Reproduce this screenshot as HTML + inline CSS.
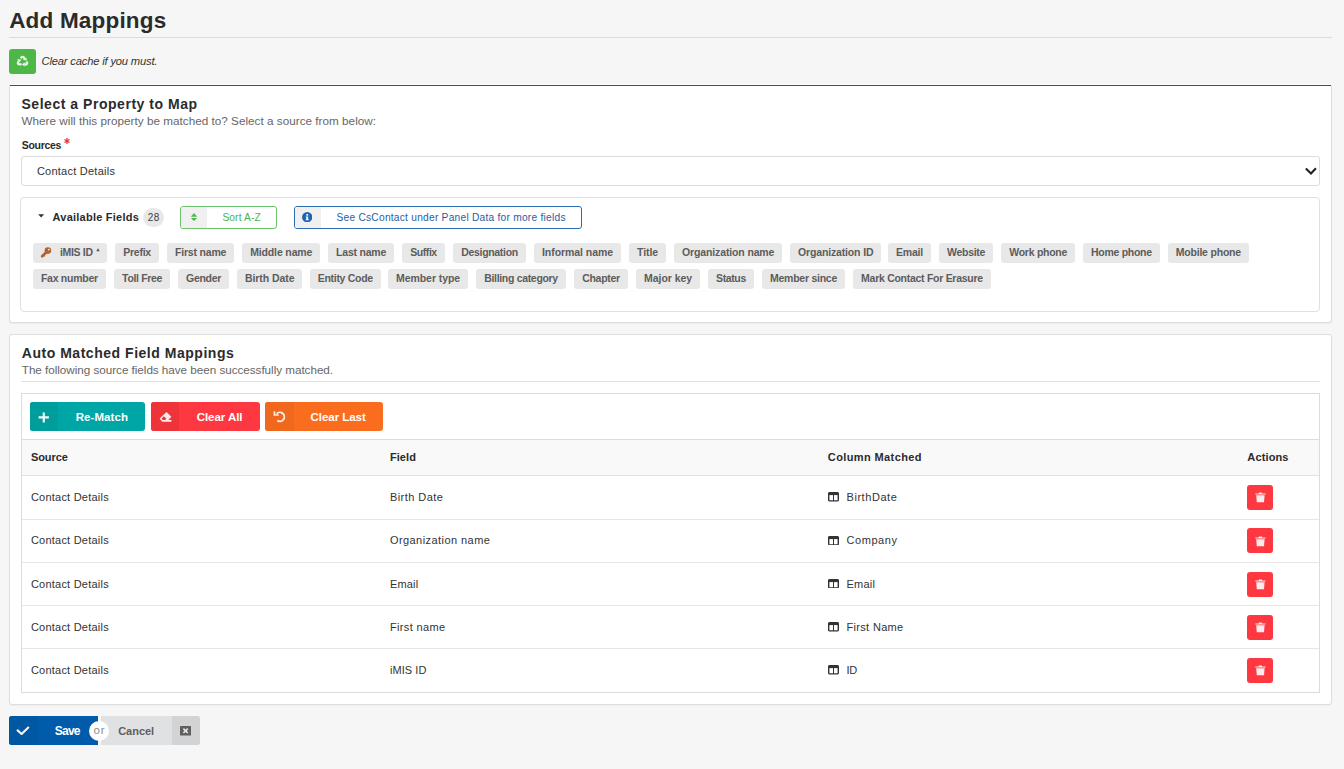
<!DOCTYPE html>
<html><head><meta charset="utf-8"><title>Add Mappings</title>
<style>
html,body{margin:0;padding:0;}
body{width:1344px;height:769px;background:#f6f6f6;position:relative;overflow:hidden;font-family:"Liberation Sans", sans-serif;}
.t{position:absolute;white-space:nowrap;}
.b{position:absolute;box-sizing:border-box;}
.chip{background:#e8e8e8;border-radius:3px;}
svg{position:absolute;}
</style></head><body>
<!-- header -->
<div class="b" style="left:9px;top:37px;width:1323px;height:1px;background:#dcdcdc"></div>
<div class="b" style="left:9px;top:49px;width:27px;height:25px;background:#4db848;border-radius:3px"></div>
<!-- panel 1 -->
<div class="b" style="left:9px;top:84px;width:1323px;height:239px;background:#fff;border:1px solid #dedede;border-top-color:#fff;border-radius:3px;box-shadow:0 1px 1px rgba(0,0,0,0.04)"></div>
<div class="b" style="left:10px;top:85px;width:1321px;height:1.4px;background:#0b5aa8"></div>
<div class="b" style="left:21px;top:156px;width:1299px;height:30px;border:1px solid #dcdcdc;border-radius:3px;background:#fff"></div>
<div class="b" style="left:20px;top:197px;width:1300px;height:115px;border:1px solid #e0e0e0;border-radius:4px;background:#fff"></div>
<div class="b" style="left:143px;top:208px;width:21px;height:19px;border-radius:10px;background:#e8e8e8"></div>
<div class="b" style="left:180px;top:206px;width:97px;height:23px;border:1px solid #6cc36c;border-radius:3px;background:#fff"></div>
<div class="b" style="left:181px;top:207px;width:26px;height:21px;background:#f0f0f0;border-radius:2px 0 0 2px"></div>
<div class="b" style="left:294px;top:206px;width:288px;height:23px;border:1px solid #2a6db5;border-radius:3px;background:#fff"></div>
<div class="b" style="left:295px;top:207px;width:26px;height:21px;background:#f0f0f0;border-radius:2px 0 0 2px"></div>
<div class='b chip' style='left:32.9px;top:243px;width:74.0px;height:20px'></div><div class='b chip' style='left:115.2px;top:243px;width:43.5px;height:20px'></div><div class='b chip' style='left:167.0px;top:243px;width:66.9px;height:20px'></div><div class='b chip' style='left:242.2px;top:243px;width:77.7px;height:20px'></div><div class='b chip' style='left:328.1px;top:243px;width:65.7px;height:20px'></div><div class='b chip' style='left:402.3px;top:243px;width:42.4px;height:20px'></div><div class='b chip' style='left:453.2px;top:243px;width:72.5px;height:20px'></div><div class='b chip' style='left:534.0px;top:243px;width:86.6px;height:20px'></div><div class='b chip' style='left:629.0px;top:243px;width:36.7px;height:20px'></div><div class='b chip' style='left:674.1px;top:243px;width:107.8px;height:20px'></div><div class='b chip' style='left:790.1px;top:243px;width:90.9px;height:20px'></div><div class='b chip' style='left:887.9px;top:243px;width:42.9px;height:20px'></div><div class='b chip' style='left:939.1px;top:243px;width:53.8px;height:20px'></div><div class='b chip' style='left:1001.2px;top:243px;width:73.7px;height:20px'></div><div class='b chip' style='left:1083.0px;top:243px;width:76.6px;height:20px'></div><div class='b chip' style='left:1167.7px;top:243px;width:81.0px;height:20px'></div><div class='b chip' style='left:32.9px;top:268.5px;width:72.7px;height:20.3px'></div><div class='b chip' style='left:114.1px;top:268.5px;width:55.8px;height:20.3px'></div><div class='b chip' style='left:178.1px;top:268.5px;width:50.7px;height:20.3px'></div><div class='b chip' style='left:237.0px;top:268.5px;width:65.0px;height:20.3px'></div><div class='b chip' style='left:309.8px;top:268.5px;width:70.8px;height:20.3px'></div><div class='b chip' style='left:388.0px;top:268.5px;width:79.7px;height:20.3px'></div><div class='b chip' style='left:476.2px;top:268.5px;width:89.5px;height:20.3px'></div><div class='b chip' style='left:574.2px;top:268.5px;width:53.5px;height:20.3px'></div><div class='b chip' style='left:636.0px;top:268.5px;width:63.7px;height:20.3px'></div><div class='b chip' style='left:708.0px;top:268.5px;width:45.8px;height:20.3px'></div><div class='b chip' style='left:762.0px;top:268.5px;width:82.8px;height:20.3px'></div><div class='b chip' style='left:853.1px;top:268.5px;width:137.5px;height:20.3px'></div>
<!-- panel 2 -->
<div class="b" style="left:9px;top:334px;width:1323px;height:371px;background:#fff;border:1px solid #dedede;border-radius:3px;box-shadow:0 1px 1px rgba(0,0,0,0.04)"></div>
<div class="b" style="left:21px;top:381px;width:1299px;height:1px;background:#e0e0e0"></div>
<div class="b" style="left:21px;top:393px;width:1299px;height:300px;border:1px solid #dcdcdc;background:#fff"></div>
<div class="b" style="left:22px;top:439px;width:1297px;height:37px;background:#f9f9f9;border-top:1px solid #dcdcdc;border-bottom:1px solid #e2e2e2"></div>
<div class="b" style="left:22px;top:519px;width:1297px;height:1px;background:#e6e6e6"></div>
<div class="b" style="left:22px;top:562px;width:1297px;height:1px;background:#e6e6e6"></div>
<div class="b" style="left:22px;top:605px;width:1297px;height:1px;background:#e6e6e6"></div>
<div class="b" style="left:22px;top:648px;width:1297px;height:1px;background:#e6e6e6"></div>
<div class="b" style="left:30px;top:402px;width:115px;height:29px;background:#00a6a6;border-radius:3px;overflow:hidden"><div class="b" style="left:0;top:0;width:28px;height:29px;background:#009d9d"></div></div>
<div class="b" style="left:151px;top:402px;width:109px;height:29px;background:#fd3840;border-radius:3px;overflow:hidden"><div class="b" style="left:0;top:0;width:28px;height:29px;background:#ee3439"></div></div>
<div class="b" style="left:265px;top:402px;width:118px;height:29px;background:#fa6d1f;border-radius:3px;overflow:hidden"><div class="b" style="left:0;top:0;width:29px;height:29px;background:#ef681d"></div></div>
<div class="b" style="left:1247px;top:484.8px;width:26px;height:25px;background:#fd3840;border-radius:3px"></div><div class="b" style="left:1247px;top:528.3px;width:26px;height:25px;background:#fd3840;border-radius:3px"></div><div class="b" style="left:1247px;top:571.6px;width:26px;height:25px;background:#fd3840;border-radius:3px"></div><div class="b" style="left:1247px;top:614.8px;width:26px;height:25px;background:#fd3840;border-radius:3px"></div><div class="b" style="left:1247px;top:658.0px;width:26px;height:25px;background:#fd3840;border-radius:3px"></div>
<!-- footer -->
<div class="b" style="left:9px;top:716px;width:89px;height:29px;background:#005cab;border-radius:3px 0 0 3px;overflow:hidden"><div class="b" style="left:0;top:0;width:29px;height:29px;background:#0058a3"></div></div>
<div class="b" style="left:101px;top:716px;width:99px;height:29px;background:#e0e1e3;border-radius:0 3px 3px 0;overflow:hidden"><div class="b" style="left:71px;top:0;width:28px;height:29px;background:#d2d3d5"></div></div>
<div class="b" style="left:89px;top:720.5px;width:20px;height:20px;background:#fff;border-radius:50%"></div>
<!-- recycle -->
<svg style="left:14px;top:53px" width="18" height="18" viewBox="0 0 18 18"><g fill="none" stroke="#eef9ec" stroke-width="2.2" stroke-linejoin="round"><path d="M6.6 5.2 L8 3.9 L9.6 4 L10.8 5.8"/><path d="M4.7 8.2 L3.8 9.9 L4.5 11.2 L7.6 11.3"/><path d="M12.4 8.4 L13.3 10.1 L12.6 11.3 L10.4 11.3"/></g><g fill="#eef9ec"><path d="M8.9 6.4 L12.6 4.8 L12.6 7.8Z"/><path d="M3 6.2 L7.3 6.4 L5.6 9.2Z"/><path d="M10.6 9.3 L10.6 13.5 L8 11.4Z"/></g></svg>
<!-- required asterisk -->
<svg style="left:63.5px;top:137.5px" width="6" height="6" viewBox="0 0 6 6"><g stroke="#e8323c" stroke-width="1.3" stroke-linecap="round"><path d="M3 0.6V5.4"/><path d="M0.9 1.8L5.1 4.2"/><path d="M5.1 1.8L0.9 4.2"/></g></svg>
<!-- select chevron -->
<svg style="left:1305px;top:167px" width="12" height="9" viewBox="0 0 12 9"><path d="M1.6 2.2 L6 6.4 L10.2 2" fill="none" stroke="#222" stroke-width="2.1" stroke-linecap="square"/></svg>
<!-- caret -->
<svg style="left:37.6px;top:214.2px" width="7" height="5" viewBox="0 0 7 5"><path d="M0.2 0.2 H6.1 L3.15 3.6Z" fill="#333"/></svg>
<!-- sort -->
<svg style="left:189.5px;top:212px" width="8" height="10" viewBox="0 0 8 10"><path d="M0.8 4.8 H7.2 L4 0.9Z" fill="#4cbb4c"/><path d="M0.8 5.9 H7.2 L4 9Z" fill="#4cbb4c"/></svg>
<!-- info -->
<svg style="left:302px;top:212px" width="10.4" height="10.4" viewBox="0 0 10 10"><circle cx="5" cy="5" r="5" fill="#1a67b4"/><rect x="4.2" y="2" width="1.7" height="1.6" fill="#fff"/><path d="M3.7 4.3 H5.9 V6.9 H6.5 V8 H3.6 V6.9 H4.2 V5.3 H3.7Z" fill="#fff"/></svg>
<!-- key -->
<svg style="left:39.5px;top:246.5px" width="12" height="11" viewBox="0 0 12 11"><circle cx="7.9" cy="3.6" r="3.3" fill="#b2642f"/><path d="M6.3 5.3 L2.2 9.3" stroke="#b2642f" stroke-width="2.7" stroke-linecap="round"/><path d="M3.6 8.2 L4.9 9.3" stroke="#b2642f" stroke-width="1.5"/><circle cx="8.9" cy="2.6" r="0.95" fill="#e8e8e8"/></svg>
<!-- iMIS asterisk -->
<svg style="left:95.5px;top:248px" width="4" height="3.5" viewBox="0 0 4 3.5"><path d="M2 0.2 L3.7 3.2 H0.3Z" fill="#555"/></svg>
<!-- plus -->
<svg style="left:38px;top:411.5px" width="11.5" height="11" viewBox="0 0 11.5 11"><path d="M5.8 0.6V10.4M0.6 5.4H10.9" stroke="#eefafa" stroke-width="2.2"/></svg>
<!-- eraser -->
<svg style="left:158.5px;top:411px" width="13" height="11.5" viewBox="0 0 13 11.5"><path d="M7.55 1 L12.3 5.85 L9.3 9.1 H12.4 V10.7 H3.3 L0.6 7.6Z" fill="#fde9eb"/><path d="M4.9 5.3 L7.4 7.7 L6.1 9 H3.8 L2.6 7.5Z" fill="#ee3439"/></svg>
<!-- undo -->
<svg style="left:273px;top:411px" width="13" height="12" viewBox="0 0 13 12"><path d="M3.7 2.6 A4.5 4.5 0 1 1 4.3 9.6" fill="none" stroke="#fdeee6" stroke-width="1.8"/><path d="M0.6 0.2 H2.3 V3.3 H5.8 V4.8 H0.6Z" fill="#fdeee6"/></svg>
<!-- save check -->
<svg style="left:16px;top:726px" width="14" height="10" viewBox="0 0 14 10"><path d="M1.6 4.4 L5.6 8 L12.3 1.5" fill="none" stroke="#f4f8fc" stroke-width="2.1" stroke-linejoin="round" stroke-linecap="round"/></svg>
<!-- cancel close -->
<svg style="left:180px;top:726px" width="11.2" height="9.6" viewBox="0 0 11.2 9.6"><rect x="0" y="0" width="11.2" height="9.6" rx="0.8" fill="#5f5f5f"/><path d="M3.4 2.6 L7.8 7 M7.8 2.6 L3.4 7" stroke="#e6e6e6" stroke-width="1.7"/></svg>
<svg style="left:828px;top:492.1px" width="11" height="9.6" viewBox="0 0 11 9.6"><rect x="0.7" y="0.7" width="9.6" height="8.2" rx="1" fill="none" stroke="#333" stroke-width="1.4"/><rect x="0.5" y="0.5" width="10" height="2.6" fill="#333"/><rect x="5" y="2" width="1" height="7" fill="#333"/></svg><svg style="left:1255px;top:492.1px" width="11" height="11" viewBox="0 0 11 11"><path d="M0.3 1.6 H10.5 V2.5 H0.3Z M3.8 0.6 H7 V1.8 H3.8Z" fill="#ffe9ea"/><path d="M1.2 3.2 H9.6 L9 10.3 H1.8Z" fill="#ffe9ea"/></svg><svg style="left:828px;top:535.6px" width="11" height="9.6" viewBox="0 0 11 9.6"><rect x="0.7" y="0.7" width="9.6" height="8.2" rx="1" fill="none" stroke="#333" stroke-width="1.4"/><rect x="0.5" y="0.5" width="10" height="2.6" fill="#333"/><rect x="5" y="2" width="1" height="7" fill="#333"/></svg><svg style="left:1255px;top:535.6px" width="11" height="11" viewBox="0 0 11 11"><path d="M0.3 1.6 H10.5 V2.5 H0.3Z M3.8 0.6 H7 V1.8 H3.8Z" fill="#ffe9ea"/><path d="M1.2 3.2 H9.6 L9 10.3 H1.8Z" fill="#ffe9ea"/></svg><svg style="left:828px;top:578.9px" width="11" height="9.6" viewBox="0 0 11 9.6"><rect x="0.7" y="0.7" width="9.6" height="8.2" rx="1" fill="none" stroke="#333" stroke-width="1.4"/><rect x="0.5" y="0.5" width="10" height="2.6" fill="#333"/><rect x="5" y="2" width="1" height="7" fill="#333"/></svg><svg style="left:1255px;top:578.9px" width="11" height="11" viewBox="0 0 11 11"><path d="M0.3 1.6 H10.5 V2.5 H0.3Z M3.8 0.6 H7 V1.8 H3.8Z" fill="#ffe9ea"/><path d="M1.2 3.2 H9.6 L9 10.3 H1.8Z" fill="#ffe9ea"/></svg><svg style="left:828px;top:622.1px" width="11" height="9.6" viewBox="0 0 11 9.6"><rect x="0.7" y="0.7" width="9.6" height="8.2" rx="1" fill="none" stroke="#333" stroke-width="1.4"/><rect x="0.5" y="0.5" width="10" height="2.6" fill="#333"/><rect x="5" y="2" width="1" height="7" fill="#333"/></svg><svg style="left:1255px;top:622.1px" width="11" height="11" viewBox="0 0 11 11"><path d="M0.3 1.6 H10.5 V2.5 H0.3Z M3.8 0.6 H7 V1.8 H3.8Z" fill="#ffe9ea"/><path d="M1.2 3.2 H9.6 L9 10.3 H1.8Z" fill="#ffe9ea"/></svg><svg style="left:828px;top:665.3px" width="11" height="9.6" viewBox="0 0 11 9.6"><rect x="0.7" y="0.7" width="9.6" height="8.2" rx="1" fill="none" stroke="#333" stroke-width="1.4"/><rect x="0.5" y="0.5" width="10" height="2.6" fill="#333"/><rect x="5" y="2" width="1" height="7" fill="#333"/></svg><svg style="left:1255px;top:665.3px" width="11" height="11" viewBox="0 0 11 11"><path d="M0.3 1.6 H10.5 V2.5 H0.3Z M3.8 0.6 H7 V1.8 H3.8Z" fill="#ffe9ea"/><path d="M1.2 3.2 H9.6 L9 10.3 H1.8Z" fill="#ffe9ea"/></svg>
<div class='t' style='left:9.20px;top:7.00px;line-height:28px;font-size:22.5px;font-weight:bold;font-style:normal;letter-spacing:0.183px;color:#2b2b2b'>Add Mappings</div><div class='t' style='left:41.50px;top:54.00px;line-height:14px;font-size:11.2px;font-weight:normal;font-style:italic;letter-spacing:-0.175px;color:#333'>Clear cache if you must.</div><div class='t' style='left:21.50px;top:95.00px;line-height:18px;font-size:14px;font-weight:bold;font-style:normal;letter-spacing:0.531px;color:#2b2b2b'>Select a Property to Map</div><div class='t' style='left:21.50px;top:113.00px;line-height:15px;font-size:11.7px;font-weight:normal;font-style:normal;letter-spacing:0.027px;color:#666'>Where will this property be matched to? Select a source from below:</div><div class='t' style='left:21.70px;top:139.00px;line-height:13px;font-size:10.5px;font-weight:bold;font-style:normal;letter-spacing:-0.29px;color:#2b2b2b'>Sources</div><div class='t' style='left:36.90px;top:164.00px;line-height:14px;font-size:11px;font-weight:normal;font-style:normal;letter-spacing:0.243px;color:#333'>Contact Details</div><div class='t' style='left:52.50px;top:210.00px;line-height:14px;font-size:11px;font-weight:bold;font-style:normal;letter-spacing:0.237px;color:#2b2b2b'>Available Fields</div><div class='t' style='left:222.40px;top:211.00px;line-height:13px;font-size:10.2px;font-weight:normal;font-style:normal;letter-spacing:0.132px;color:#48b448'>Sort A-Z</div><div class='t' style='left:336.50px;top:211.00px;line-height:13px;font-size:10.2px;font-weight:normal;font-style:normal;letter-spacing:0.244px;color:#1f5ea8'>See CsContact under Panel Data for more fields</div><div class='t' style='left:21.80px;top:344.00px;line-height:18px;font-size:14px;font-weight:bold;font-style:normal;letter-spacing:0.525px;color:#2b2b2b'>Auto Matched Field Mappings</div><div class='t' style='left:21.80px;top:362.00px;line-height:15px;font-size:11.7px;font-weight:normal;font-style:normal;letter-spacing:-0.032px;color:#666'>The following source fields have been successfully matched.</div><div class='t' style='left:75.70px;top:410.00px;line-height:14px;font-size:11.5px;font-weight:bold;font-style:normal;letter-spacing:0.076px;color:#fff'>Re-Match</div><div class='t' style='left:196.70px;top:410.00px;line-height:14px;font-size:11.5px;font-weight:bold;font-style:normal;letter-spacing:-0.054px;color:#fff'>Clear All</div><div class='t' style='left:310.60px;top:410.00px;line-height:14px;font-size:11.5px;font-weight:bold;font-style:normal;letter-spacing:-0.045px;color:#fff'>Clear Last</div><div class='t' style='left:30.90px;top:450.00px;line-height:14px;font-size:11px;font-weight:bold;font-style:normal;letter-spacing:-0.039px;color:#2b2b2b'>Source</div><div class='t' style='left:389.90px;top:450.00px;line-height:14px;font-size:11px;font-weight:bold;font-style:normal;letter-spacing:0.082px;color:#2b2b2b'>Field</div><div class='t' style='left:827.80px;top:450.00px;line-height:14px;font-size:11px;font-weight:bold;font-style:normal;letter-spacing:0.39px;color:#2b2b2b'>Column Matched</div><div class='t' style='left:1247.30px;top:450.00px;line-height:14px;font-size:11px;font-weight:bold;font-style:normal;letter-spacing:0.143px;color:#2b2b2b'>Actions</div><div class='t' style='left:30.90px;top:490.00px;line-height:14px;font-size:11px;font-weight:normal;font-style:normal;letter-spacing:0.229px;color:#333'>Contact Details</div><div class='t' style='left:389.90px;top:490.00px;line-height:14px;font-size:11px;font-weight:normal;font-style:normal;letter-spacing:0.464px;color:#333'>Birth Date</div><div class='t' style='left:846.50px;top:490.00px;line-height:14px;font-size:11px;font-weight:normal;font-style:normal;letter-spacing:0.555px;color:#333'>BirthDate</div><div class='t' style='left:30.90px;top:533.00px;line-height:14px;font-size:11px;font-weight:normal;font-style:normal;letter-spacing:0.229px;color:#333'>Contact Details</div><div class='t' style='left:389.90px;top:533.00px;line-height:14px;font-size:11px;font-weight:normal;font-style:normal;letter-spacing:0.44px;color:#333'>Organization name</div><div class='t' style='left:846.50px;top:533.00px;line-height:14px;font-size:11px;font-weight:normal;font-style:normal;letter-spacing:0.554px;color:#333'>Company</div><div class='t' style='left:30.90px;top:577.00px;line-height:14px;font-size:11px;font-weight:normal;font-style:normal;letter-spacing:0.229px;color:#333'>Contact Details</div><div class='t' style='left:389.90px;top:577.00px;line-height:14px;font-size:11px;font-weight:normal;font-style:normal;letter-spacing:0.196px;color:#333'>Email</div><div class='t' style='left:846.50px;top:577.00px;line-height:14px;font-size:11px;font-weight:normal;font-style:normal;letter-spacing:0.246px;color:#333'>Email</div><div class='t' style='left:30.90px;top:620.00px;line-height:14px;font-size:11px;font-weight:normal;font-style:normal;letter-spacing:0.229px;color:#333'>Contact Details</div><div class='t' style='left:389.90px;top:620.00px;line-height:14px;font-size:11px;font-weight:normal;font-style:normal;letter-spacing:0.359px;color:#333'>First name</div><div class='t' style='left:846.50px;top:620.00px;line-height:14px;font-size:11px;font-weight:normal;font-style:normal;letter-spacing:0.324px;color:#333'>First Name</div><div class='t' style='left:30.90px;top:663.00px;line-height:14px;font-size:11px;font-weight:normal;font-style:normal;letter-spacing:0.229px;color:#333'>Contact Details</div><div class='t' style='left:389.90px;top:663.00px;line-height:14px;font-size:11px;font-weight:normal;font-style:normal;letter-spacing:0.073px;color:#333'>iMIS ID</div><div class='t' style='left:846.50px;top:663.00px;line-height:14px;font-size:11px;font-weight:normal;font-style:normal;letter-spacing:-0.2px;color:#333'>ID</div><div class='t' style='left:54.70px;top:724.00px;line-height:15px;font-size:12px;font-weight:bold;font-style:normal;letter-spacing:-0.744px;color:#fff'>Save</div><div class='t' style='left:118.20px;top:724.00px;line-height:14px;font-size:11px;font-weight:bold;font-style:normal;letter-spacing:-0.016px;color:#5e5e5e'>Cancel</div><div class='t' style='left:93.60px;top:723.00px;line-height:14px;font-size:11.5px;font-weight:normal;font-style:normal;letter-spacing:0.766px;color:#8c8c8c'>or</div><div class='t' style='left:60.00px;top:246.00px;line-height:13px;font-size:10.5px;font-weight:bold;font-style:normal;letter-spacing:-0.336px;color:#5c5c5c'>iMIS ID</div><div class='t' style='left:123.20px;top:246.00px;line-height:13px;font-size:10.5px;font-weight:bold;font-style:normal;letter-spacing:-0.238px;color:#5c5c5c'>Prefix</div><div class='t' style='left:175.00px;top:246.00px;line-height:13px;font-size:10.5px;font-weight:bold;font-style:normal;letter-spacing:-0.19px;color:#5c5c5c'>First name</div><div class='t' style='left:250.20px;top:246.00px;line-height:13px;font-size:10.5px;font-weight:bold;font-style:normal;letter-spacing:-0.141px;color:#5c5c5c'>Middle name</div><div class='t' style='left:336.10px;top:246.00px;line-height:13px;font-size:10.5px;font-weight:bold;font-style:normal;letter-spacing:-0.217px;color:#5c5c5c'>Last name</div><div class='t' style='left:410.30px;top:246.00px;line-height:13px;font-size:10.5px;font-weight:bold;font-style:normal;letter-spacing:-0.454px;color:#5c5c5c'>Suffix</div><div class='t' style='left:461.20px;top:246.00px;line-height:13px;font-size:10.5px;font-weight:bold;font-style:normal;letter-spacing:-0.309px;color:#5c5c5c'>Designation</div><div class='t' style='left:542.00px;top:246.00px;line-height:13px;font-size:10.5px;font-weight:bold;font-style:normal;letter-spacing:-0.057px;color:#5c5c5c'>Informal name</div><div class='t' style='left:637.00px;top:246.00px;line-height:13px;font-size:10.5px;font-weight:bold;font-style:normal;letter-spacing:-0.052px;color:#5c5c5c'>Title</div><div class='t' style='left:682.10px;top:246.00px;line-height:13px;font-size:10.5px;font-weight:bold;font-style:normal;letter-spacing:-0.138px;color:#5c5c5c'>Organization name</div><div class='t' style='left:798.10px;top:246.00px;line-height:13px;font-size:10.5px;font-weight:bold;font-style:normal;letter-spacing:-0.157px;color:#5c5c5c'>Organization ID</div><div class='t' style='left:895.90px;top:246.00px;line-height:13px;font-size:10.5px;font-weight:bold;font-style:normal;letter-spacing:-0.154px;color:#5c5c5c'>Email</div><div class='t' style='left:947.10px;top:246.00px;line-height:13px;font-size:10.5px;font-weight:bold;font-style:normal;letter-spacing:-0.296px;color:#5c5c5c'>Website</div><div class='t' style='left:1009.20px;top:246.00px;line-height:13px;font-size:10.5px;font-weight:bold;font-style:normal;letter-spacing:-0.254px;color:#5c5c5c'>Work phone</div><div class='t' style='left:1091.00px;top:246.00px;line-height:13px;font-size:10.5px;font-weight:bold;font-style:normal;letter-spacing:-0.277px;color:#5c5c5c'>Home phone</div><div class='t' style='left:1175.70px;top:246.00px;line-height:13px;font-size:10.5px;font-weight:bold;font-style:normal;letter-spacing:-0.197px;color:#5c5c5c'>Mobile phone</div><div class='t' style='left:40.90px;top:272.00px;line-height:13px;font-size:10.5px;font-weight:bold;font-style:normal;letter-spacing:-0.257px;color:#5c5c5c'>Fax number</div><div class='t' style='left:122.10px;top:272.00px;line-height:13px;font-size:10.5px;font-weight:bold;font-style:normal;letter-spacing:-0.336px;color:#5c5c5c'>Toll Free</div><div class='t' style='left:186.10px;top:272.00px;line-height:13px;font-size:10.5px;font-weight:bold;font-style:normal;letter-spacing:-0.313px;color:#5c5c5c'>Gender</div><div class='t' style='left:245.00px;top:272.00px;line-height:13px;font-size:10.5px;font-weight:bold;font-style:normal;letter-spacing:-0.076px;color:#5c5c5c'>Birth Date</div><div class='t' style='left:317.80px;top:272.00px;line-height:13px;font-size:10.5px;font-weight:bold;font-style:normal;letter-spacing:-0.304px;color:#5c5c5c'>Entity Code</div><div class='t' style='left:396.00px;top:272.00px;line-height:13px;font-size:10.5px;font-weight:bold;font-style:normal;letter-spacing:-0.058px;color:#5c5c5c'>Member type</div><div class='t' style='left:484.20px;top:272.00px;line-height:13px;font-size:10.5px;font-weight:bold;font-style:normal;letter-spacing:-0.318px;color:#5c5c5c'>Billing category</div><div class='t' style='left:582.20px;top:272.00px;line-height:13px;font-size:10.5px;font-weight:bold;font-style:normal;letter-spacing:-0.281px;color:#5c5c5c'>Chapter</div><div class='t' style='left:644.00px;top:272.00px;line-height:13px;font-size:10.5px;font-weight:bold;font-style:normal;letter-spacing:-0.032px;color:#5c5c5c'>Major key</div><div class='t' style='left:716.00px;top:272.00px;line-height:13px;font-size:10.5px;font-weight:bold;font-style:normal;letter-spacing:-0.369px;color:#5c5c5c'>Status</div><div class='t' style='left:770.00px;top:272.00px;line-height:13px;font-size:10.5px;font-weight:bold;font-style:normal;letter-spacing:-0.248px;color:#5c5c5c'>Member since</div><div class='t' style='left:861.10px;top:272.00px;line-height:13px;font-size:10.5px;font-weight:bold;font-style:normal;letter-spacing:-0.277px;color:#5c5c5c'>Mark Contact For Erasure</div><div class='t' style='left:147.80px;top:212.00px;line-height:12px;font-size:10px;font-weight:normal;font-style:normal;letter-spacing:0.275px;color:#3d3d3d'>28</div>
</body></html>
